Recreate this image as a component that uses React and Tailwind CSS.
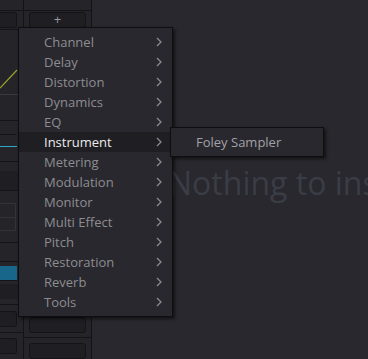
const items = [
  'Channel',
  'Delay',
  'Distortion',
  'Dynamics',
  'EQ',
  'Instrument',
  'Metering',
  'Modulation',
  'Monitor',
  'Multi Effect',
  'Pitch',
  'Restoration',
  'Reverb',
  'Tools',
];

function Chevron() {
  return (
    <svg width="6" height="10" viewBox="0 0 6 10" className="text-[#8a8a8e]">
      <path d="M1 1 L5 5 L1 9" fill="none" stroke="currentColor" strokeWidth="1.3" />
    </svg>
  );
}

function Btn({ children, className = '' }) {
  return (
    <div className={`h-[16px] rounded-[3px] border border-[#141416] bg-[#1f1e23] flex items-center justify-center text-[#9a9a9e] text-[13px] leading-none ${className}`}>
      {children}
    </div>
  );
}

function Strip() {
  return (
    <div className="w-[92px] shrink-0 h-full flex bg-[#252429] border-r border-[#141416]">
      {/* narrow column */}
      <div className="w-[24px] shrink-0 border-r border-[#141416] flex flex-col">
        <div className="h-[11px] border-b border-[#141416]" />
        <div className="h-[19px] border-b border-[#141416] pt-[1px] pr-[6px]">
          <Btn className="rounded-l-none border-l-0" />
        </div>
        <div className="h-[36px]" />
        <div className="h-[29px] relative border-b border-[#3a393f]">
          <svg width="18" height="29" className="absolute left-0 top-0">
            <path d="M0 22 L17 4" stroke="#9aa32a" strokeWidth="1.2" fill="none" />
          </svg>
        </div>
        <div className="h-[26px] border-b border-[#141416]" />
        <div className="h-[14px] border-b border-[#141416] mr-[7px]" />
        <div className="h-[12px] border-b border-[#2aa9c9] mr-[6px]" />
        <div className="h-[15px] border-b border-[#141416]" />
        <div className="h-[9px]" />
        <div className="h-[20px] bg-[#1f1e23] border-b border-[#141416]" />
        <div className="h-[12px]" />
        <div className="h-[28px] mr-[7px] border border-l-0 border-[#333238] flex flex-col">
          <div className="h-[14px] border-b border-[#333238]" />
        </div>
        <div className="h-[12px] border-b border-[#141416]" />
        <div className="h-[19px] border-b border-[#141416]" />
        <div className="h-[4px]" />
        <div className="h-[15px] bg-[#18668a] mr-[6px] border-b border-[#141416]" />
        <div className="h-[3px]" />
        <div className="h-[15px] bg-[#1f1e23]" />
        <div className="h-[6px] border-b border-[#141416]" />
        <div className="h-[28px] border-b border-[#141416] pt-[6px] pr-[6px]">
          <Btn className="rounded-l-none border-l-0" />
        </div>
        <div className="flex-1 pt-[5px] pr-[6px]">
          <Btn className="rounded-l-none border-l-0" />
        </div>
      </div>
      {/* wide column */}
      <div className="flex-1 flex flex-col">
        <div className="h-[11px] border-b border-[#141416]" />
        <div className="h-[19px] border-b border-[#141416] pt-[1px] px-[5px]">
          <Btn>+</Btn>
        </div>
        <div className="h-[288px] border-b border-[#141416]" />
        <div className="h-[28px] border-b border-[#141416] pt-[6px] px-[5px]">
          <Btn />
        </div>
        <div className="flex-1 pt-[5px] px-[5px]">
          <Btn />
        </div>
      </div>
    </div>
  );
}

export default function App() {
  return (
    <div className="relative w-[368px] h-[359px] overflow-hidden bg-[#29282e] flex" style={{ fontFamily: '"Open Sans", sans-serif' }}>
      <Strip />
      <div className="flex-1 overflow-hidden pt-[167px] pl-[76px]">
        <div className="whitespace-nowrap text-[32px] leading-none text-[#3a3d45]">Nothing to inspect</div>
      </div>

      {/* plugin category menu */}
      <div className="absolute left-[18px] top-[27px] w-[155px] bg-[#29282e] border border-[#0e0e10] py-[4px] shadow-[2px_2px_3px_rgba(0,0,0,0.55)]">
        {items.map((it) => (
          <div
            key={it}
            className={`h-[20px] flex items-center justify-between pl-[25px] pr-[10px] text-[13px] ${
              it === 'Instrument' ? 'bg-[#1f1e22] text-[#ececec]' : 'text-[#8d8d91]'
            }`}
          >
            <span className="pt-[2px]">{it}</span>
            <Chevron />
          </div>
        ))}
      </div>

      {/* submenu */}
      <div className="absolute left-[170px] top-[127px] w-[154px] h-[30px] bg-[#29282e] border border-[#0e0e10] flex items-center pl-[25px] shadow-[2px_2px_3px_rgba(0,0,0,0.55)]">
        <span className="pt-[2px] text-[13px] text-[#a2a2a6]">Foley Sampler</span>
      </div>
    </div>
  );
}
